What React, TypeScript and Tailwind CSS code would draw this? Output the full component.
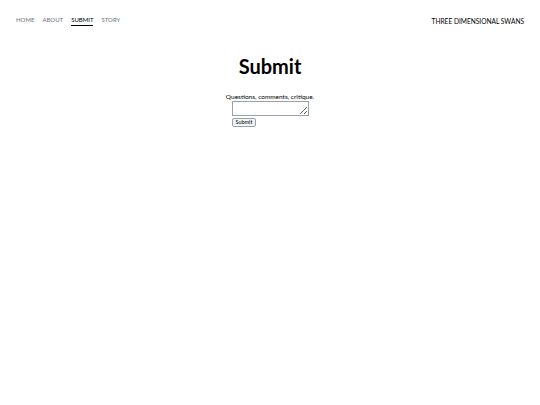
export default function App() {
  return (
    <div className="min-h-screen bg-white text-black" style={{ fontFamily: "Lato, sans-serif" }}>
      <header className="flex items-center justify-between px-4 pt-[17px]">
        <nav className="flex gap-[8px] text-[6px] uppercase leading-none">
          <a className="pb-[2px] text-gray-500">Home</a>
          <a className="pb-[2px] text-gray-500">About</a>
          <a className="border-b border-black pb-[2px] text-black">Submit</a>
          <a className="pb-[2px] text-gray-500">Story</a>
        </nav>
        <div className="text-[6.6px] uppercase leading-none">Three Dimensional Swans</div>
      </header>
      <main className="mt-[30px] flex flex-col items-center">
        <h1 className="text-[20px] font-bold leading-none">Submit</h1>
        <p className="mt-[18px] text-[6.5px] leading-none">Questions, comments, critique.</p>
        <form className="flex flex-col items-start">
          <textarea className="h-[15px] w-[77px] border border-gray-400 text-[6px]" />
          <button className="mt-[2px] rounded-[2px] border border-gray-400 bg-gray-100 px-[3px] text-[5.5px] leading-[7px]">
            Submit
          </button>
        </form>
      </main>
    </div>
  );
}
